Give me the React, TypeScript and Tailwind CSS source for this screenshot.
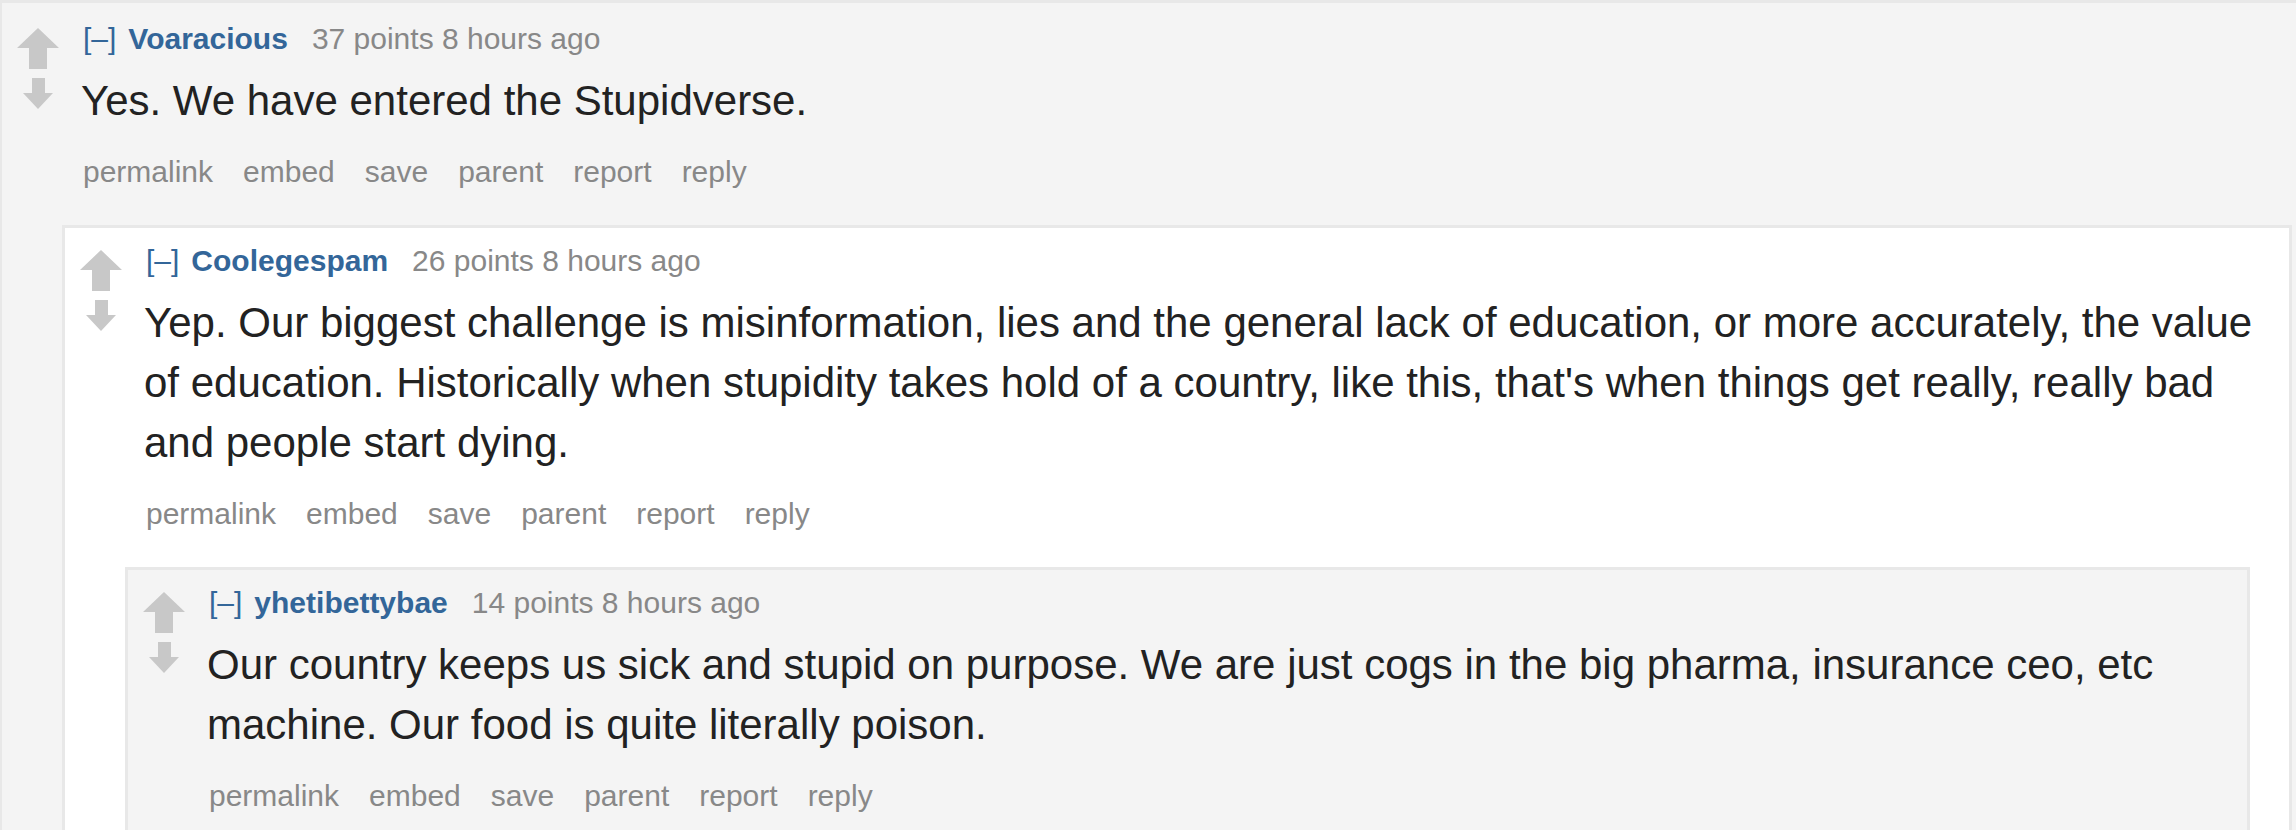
import React from "react";

const UpArrow = () => (
  <svg width="42" height="41" viewBox="0 0 42 41" className="block blur-[0.6px]">
    <polygon points="21,0 42,20 30,20 30,41 12,41 12,20 0,20" fill="#c8c8c8" />
  </svg>
);

const DownArrow = () => (
  <svg width="30" height="31" viewBox="0 0 30 31" className="block blur-[0.6px]">
    <polygon points="9,0 22,0 22,15 30,15 15,31 0,15 9,15" fill="#c8c8c8" />
  </svg>
);

type CommentProps = {
  author: string;
  points: string;
  lines: string;
  odd: boolean;
  first?: boolean;
  children?: React.ReactNode;
};

const actions = ["permalink", "embed", "save", "parent", "report", "reply"];

function Comment({ author, points, lines, odd, first, children }: CommentProps) {
  return (
    <div
      className={`${odd ? "bg-[#f4f4f4]" : "bg-white"} border-[3px] border-[#e8e8e8] pb-[40px] ${
        first ? "border-l-2 pt-[3px]" : ""
      }`}
    >
      <div className="flex">
        <div className="w-[79px] shrink-0 pl-[15px] pt-[22px]">
          <div className="flex w-[42px] flex-col items-center gap-[9px]">
            <UpArrow />
            <DownArrow />
          </div>
        </div>
        <div className="min-w-0 flex-1 pt-[18px]">
          <div className="whitespace-nowrap pl-[2px] text-[30px] leading-[30px]">
            <span className="text-[#336699]">[–]</span>
            <span className="ml-[12px] font-bold text-[#336699]">{author}</span>
            <span className="ml-[24px] text-[#888888]">{points} points 8 hours ago</span>
          </div>
          <div className="mt-[17px] text-[42px] leading-[60px] text-[#222222]">{lines}</div>
          <div className="mt-[26px] flex gap-[30px] pl-[2px] text-[30px] leading-[30px] text-[#888888]">
            {actions.map((a) => (
              <span key={a}>{a}</span>
            ))}
          </div>
        </div>
      </div>
      {children ? <div className="ml-[60px] mr-[39px] mt-[38px]">{children}</div> : null}
    </div>
  );
}

export default function App() {
  return (
    <div
      className="h-[830px] w-[2296px] overflow-hidden bg-white"
      style={{ fontFamily: '"Liberation Sans", Arial, sans-serif' }}
    >
      <div className="w-[2334px]">
        <Comment
          first
          odd
          author="Voaracious"
          points="37"
          lines="Yes. We have entered the Stupidverse."
        >
          <Comment
            odd={false}
            author="Coolegespam"
            points="26"
            lines="Yep. Our biggest challenge is misinformation, lies and the general lack of education, or more accurately, the value of education. Historically when stupidity takes hold of a country, like this, that's when things get really, really bad and people start dying."
          >
            <Comment
              odd
              author="yhetibettybae"
              points="14"
              lines="Our country keeps us sick and stupid on purpose. We are just cogs in the big pharma, insurance ceo, etc machine. Our food is quite literally poison."
            />
          </Comment>
        </Comment>
      </div>
    </div>
  );
}
